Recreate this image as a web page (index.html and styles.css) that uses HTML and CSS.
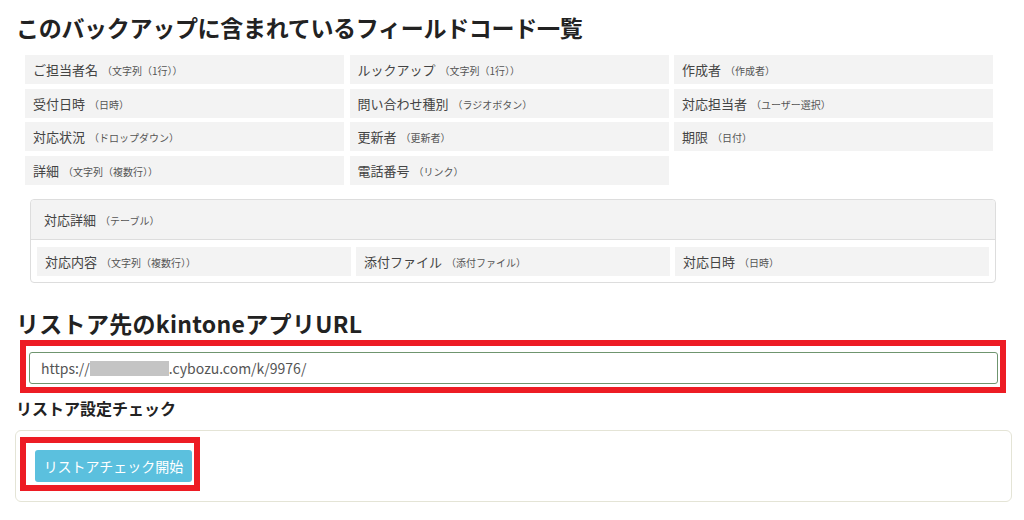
FILE: index.html
```html
<!DOCTYPE html>
<html lang="ja">
<head>
  <meta charset="UTF-8">
  <title>リストア</title>
  <link rel="stylesheet" href="styles.css">
</head>
<body>
  <div class="page">
    <h1 class="title">このバックアップに含まれているフィールドコード一覧</h1>

    <div class="field-grid">
      <div class="field">ご担当者名<span class="type">（文字列（1行））</span></div>
      <div class="field">ルックアップ<span class="type">（文字列（1行））</span></div>
      <div class="field">作成者<span class="type">（作成者）</span></div>
      <div class="field">受付日時<span class="type">（日時）</span></div>
      <div class="field">問い合わせ種別<span class="type">（ラジオボタン）</span></div>
      <div class="field">対応担当者<span class="type">（ユーザー選択）</span></div>
      <div class="field">対応状況<span class="type">（ドロップダウン）</span></div>
      <div class="field">更新者<span class="type">（更新者）</span></div>
      <div class="field">期限<span class="type">（日付）</span></div>
      <div class="field">詳細<span class="type">（文字列（複数行））</span></div>
      <div class="field">電話番号<span class="type">（リンク）</span></div>
    </div>

    <div class="subtable">
      <div class="subtable-head">対応詳細<span class="type">（テーブル）</span></div>
      <div class="subtable-body">
        <div class="field">対応内容<span class="type">（文字列（複数行））</span></div>
        <div class="field">添付ファイル<span class="type">（添付ファイル）</span></div>
        <div class="field">対応日時<span class="type">（日時）</span></div>
      </div>
    </div>

    <h2 class="title url-title">リストア先のkintoneアプリURL</h2>
    <div class="mark mark-url">
      <div class="url-input">https://<span class="masked"></span>.cybozu.com/k/9976/</div>
    </div>

    <h3 class="check-title">リストア設定チェック</h3>
    <div class="check-panel">
      <div class="mark mark-btn">
        <button class="btn-check">リストアチェック開始</button>
      </div>
    </div>
  </div>
</body>
</html>
```

FILE: styles.css
```css
body {
  margin: 0;
  background: #fff;
  font-family: "Noto Sans CJK JP", "Noto Sans", sans-serif;
  color: #333;
}
.page {
  padding: 0 0 0 16px;
}
.title {
  margin: 0;
  padding-top: 12px;
  height: 32px;
  line-height: 30px;
  font-size: 23px;
  font-weight: bold;
  color: #222;
  letter-spacing: -0.3px;
}
.field-grid {
  margin: 11px 0 0 9px;
  width: 968px;
  display: grid;
  grid-template-columns: repeat(3, 1fr);
  column-gap: 5.5px;
  row-gap: 4.6px;
}
.field {
  height: 29px;
  line-height: 29px;
  padding-left: 8px;
  background: #f3f3f3;
  font-size: 13px;
  color: #444;
  white-space: nowrap;
  overflow: hidden;
}
.type {
  font-size: 10px;
  color: #555;
  margin-left: 4px;
}
.subtable {
  margin: 14px 0 0 14px;
  width: 964px;
  border: 1px solid #ddd;
  border-radius: 4px;
}
.subtable-head {
  height: 39px;
  line-height: 39px;
  padding-left: 13px;
  background: #f3f3f3;
  border-bottom: 1px solid #ddd;
  border-radius: 4px 4px 0 0;
  font-size: 13px;
  color: #444;
}
.subtable-body {
  padding: 7px 6px 6px 6px;
  display: grid;
  grid-template-columns: repeat(3, 1fr);
  column-gap: 5px;
}
.url-title {
  padding-top: 25px;
  letter-spacing: 0.3px;
}
.mark {
  border: 6px solid #ed1c24;
}
.mark-url {
  margin: 0 0 0 4px;
  width: 969px;
  padding: 6px 2px 3px 3px;
}
.url-input {
  height: 30px;
  line-height: 30px;
  border: 1px solid #6f956f;
  border-radius: 3px;
  padding-left: 11px;
  font-size: 14px;
  color: #555;
}
.masked {
  display: inline-block;
  width: 79px;
  height: 15px;
  background: #c4c4c4;
  vertical-align: -2px;
}
.check-title {
  margin: 0;
  padding-top: 4px;
  height: 22px;
  line-height: 22px;
  font-size: 16px;
  font-weight: bold;
  color: #222;
}
.check-panel {
  margin: 11px 0 0 -1px;
  width: 991px;
  padding: 6px 0 10px 4px;
  border: 1px solid #e4e4d6;
  border-radius: 6px;
}
.mark-btn {
  display: inline-block;
  padding: 7px 2px 3px 9px;
}
.btn-check {
  display: block;
  width: 157px;
  height: 32px;
  border: none;
  border-radius: 3px;
  background: #5bc0de;
  color: #fff;
  font-family: inherit;
  font-size: 14px;
  padding: 0;
}
```
